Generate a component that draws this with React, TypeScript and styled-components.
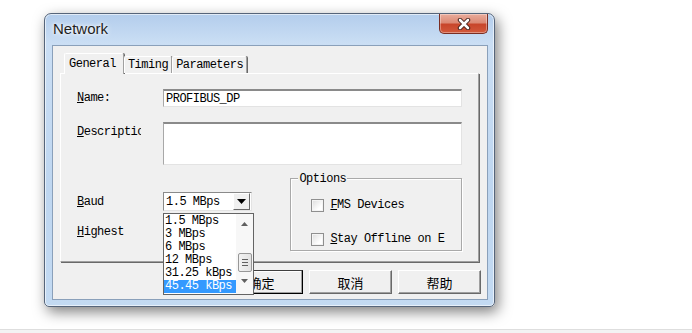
import React from "react";
import styled, { createGlobalStyle } from "styled-components";

const GlobalStyle = createGlobalStyle`
  html, body {
    margin: 0;
    padding: 0;
    background: #fff;
  }
  body {
    width: 692px;
    height: 333px;
    overflow: hidden;
    font-family: "Liberation Mono", "Noto Sans CJK SC", monospace;
  }
`;

const Desktop = styled.div`
  height: 329px;
  box-sizing: border-box;
  padding: 13px 0 0 44px;
  background: #fff;
`;

const Footer = styled.div`
  height: 4px;
  box-sizing: border-box;
  border-top: 1px solid #dedede;
  background: #f3f3f3;
`;

const Window = styled.div`
  width: 451px;
  height: 294px;
  box-sizing: border-box;
  display: flex;
  flex-direction: column;
  padding: 0 6px 6px 7px;
  border: 1px solid #56657a;
  border-radius: 7px 7px 5px 5px;
  background: linear-gradient(180deg, #b3cdec 0%, #cadef4 10%, #bed6f0 60%, #c3daf2 100%);
  box-shadow: 3px 5px 14px rgba(0, 0, 0, 0.5), inset 0 0 0 1px rgba(255, 255, 255, 0.6);
`;

const TitleBar = styled.div`
  height: 31px;
  display: flex;
  justify-content: space-between;
  align-items: flex-start;
`;

const Title = styled.span`
  margin: 6px 0 0 1px;
  font-family: "Liberation Sans", "Noto Sans", sans-serif;
  font-size: 15px;
  color: #1e1e1e;
  text-shadow: 0 0 6px #fff, 0 0 3px #fff;
`;

const CloseButton = styled.div`
  width: 49px;
  height: 20px;
  box-sizing: border-box;
  border: 1px solid #7a2d22;
  border-top: none;
  border-radius: 0 0 5px 5px;
  background: linear-gradient(180deg, #e9ac9c 0%, #dc8a75 45%, #c8462b 55%, #d2593c 100%);
  box-shadow: inset 0 0 0 1px rgba(255, 255, 255, 0.35);
  display: flex;
  align-items: center;
  justify-content: center;
`;

const Client = styled.div`
  flex: 1;
  display: flex;
  flex-direction: column;
  padding: 7px 6px 5px 7px;
  background: #f0f0f0;
  border: 1px solid #8aa0ba;
`;

const TabControl = styled.div`
  margin-right: 2px;
  display: flex;
  flex-direction: column;
`;

const TabStrip = styled.div`
  height: 20px;
  display: flex;
  align-items: flex-end;
  padding-left: 4px;
  position: relative;
  z-index: 1;
`;

const Tab = styled.div<{ $active?: boolean }>`
  height: ${(p) => (p.$active ? 21 : 17)}px;
  box-sizing: border-box;
  padding: ${(p) => (p.$active ? "0 7px 0 4px" : "0 3px 0 3px")};
  margin-bottom: ${(p) => (p.$active ? -1 : 0)}px;
  display: flex;
  align-items: center;
  font-size: 12px;
  letter-spacing: -0.5px;
  color: #000;
  background: #f0f0f0;
  border-left: 1px solid #fff;
  border-top: 1px solid #fff;
  border-right: 1px solid #a0a0a0;
  box-shadow: 1px 0 0 #696969;
  border-radius: 2px 2px 0 0;
`;

const TabPage = styled.div`
  height: 189px;
  box-sizing: border-box;
  padding: 15px 16px 0 16px;
  border-left: 1px solid #fff;
  border-top: 1px solid #fff;
  border-right: 1px solid #a0a0a0;
  border-bottom: 1px solid #a0a0a0;
  box-shadow: 1px 1px 0 #696969;
`;

const Row = styled.div<{ $top?: number; $align?: string }>`
  display: flex;
  align-items: ${(p) => p.$align || "center"};
  margin-top: ${(p) => p.$top || 0}px;
`;

const Label = styled.div<{ $clip?: number; $pad?: number }>`
  width: 86px;
  flex: none;
  font-size: 12px;
  letter-spacing: -0.5px;
  color: #000;
  padding-top: ${(p) => p.$pad || 0}px;
  span {
    display: inline-block;
    max-width: ${(p) => (p.$clip ? `${p.$clip}px` : "none")};
    overflow: hidden;
    white-space: nowrap;
    vertical-align: top;
  }
`;

const Field = styled.div<{ $h: number }>`
  width: 299px;
  height: ${(p) => p.$h}px;
  box-sizing: border-box;
  padding: 1px 2px;
  background: #fff;
  border-top: 2px solid #8a8a8a;
  border-left: 1px solid #a8a8a8;
  border-right: 1px solid #e3e3e3;
  border-bottom: 1px solid #e3e3e3;
  font-size: 12px;
  letter-spacing: -0.5px;
  line-height: 14px;
  color: #000;
`;

const Bottom = styled.div`
  display: flex;
  margin-top: 13px;
`;

const LeftCol = styled.div`
  width: 214px;
  padding-top: 14px;
`;

const Combo = styled.div`
  position: relative;
  width: 89px;
  height: 19px;
  box-sizing: border-box;
  background: #fff;
  border-top: 1px solid #8a8a8a;
  border-left: 1px solid #8a8a8a;
  border-right: 1px solid #e3e3e3;
  border-bottom: 1px solid #e3e3e3;
  display: flex;
  align-items: center;
  justify-content: space-between;
  font-size: 12px;
  letter-spacing: -0.5px;
  color: #000;
  padding-left: 2px;
`;

const ComboArrow = styled.div`
  width: 17px;
  height: 17px;
  box-sizing: border-box;
  background: #f0f0f0;
  border-left: 1px solid #fff;
  border-top: 1px solid #fff;
  border-right: 1px solid #696969;
  border-bottom: 1px solid #696969;
  display: flex;
  align-items: center;
  justify-content: center;
  margin-right: 1px;
`;

const Spacer = styled.div`
  height: 19px;
`;

const DropList = styled.div`
  position: absolute;
  top: 20px;
  left: -1px;
  width: 91px;
  height: 82px;
  box-sizing: border-box;
  border: 1px solid #646464;
  background: #fff;
  display: flex;
  z-index: 10;
`;

const Items = styled.div`
  flex: 1;
  padding-top: 1px;
`;

const Item = styled.div<{ $selected?: boolean }>`
  height: 13px;
  line-height: 13px;
  padding-left: 1px;
  font-size: 12px;
  letter-spacing: -0.5px;
  white-space: nowrap;
  color: ${(p) => (p.$selected ? "#fff" : "#000")};
  background: ${(p) => (p.$selected ? "#3399ff" : "transparent")};
`;

const ScrollBar = styled.div`
  width: 17px;
  background: #f7f7f7;
  display: flex;
  flex-direction: column;
  align-items: center;
  padding: 8px 0 0;
  box-sizing: border-box;
`;

const Thumb = styled.div`
  width: 14px;
  height: 19px;
  box-sizing: border-box;
  border: 1px solid #979797;
  border-radius: 2px;
  background: linear-gradient(90deg, #f2f2f2, #e2e2e2);
  display: flex;
  flex-direction: column;
  align-items: center;
  justify-content: center;
  gap: 2px;
  margin: 27px 0 7px;
  i {
    display: block;
    width: 6px;
    height: 1px;
    background: #606060;
  }
`;

const Group = styled.div`
  position: relative;
  width: 172px;
  height: 73px;
  box-sizing: border-box;
  border: 1px solid #a9a9a9;
  box-shadow: inset 1px 1px 0 #fff, 1px 1px 0 #fff;
  padding: 19px 0 0 20px;
  display: flex;
  flex-direction: column;
  gap: 20px;
`;

const Legend = styled.span`
  position: absolute;
  top: -7px;
  left: 7px;
  padding: 0 1px;
  background: #f0f0f0;
  font-size: 12px;
  letter-spacing: -0.5px;
  color: #000;
`;

const Check = styled.label`
  display: flex;
  align-items: center;
  gap: 6px;
  font-size: 12px;
  letter-spacing: -0.5px;
  color: #000;
  white-space: nowrap;
`;

const Box = styled.span`
  width: 13px;
  height: 13px;
  box-sizing: border-box;
  border: 1px solid #8f8f8f;
  background: linear-gradient(135deg, #dcdcdc, #fff 70%);
  box-shadow: inset 0 0 0 1px #f4f4f4;
`;

const Buttons = styled.div`
  display: flex;
  justify-content: flex-end;
  gap: 6px;
  margin-top: 8px;
`;

const Button = styled.div<{ $default?: boolean }>`
  width: 83px;
  height: 24px;
  box-sizing: border-box;
  background: #f0f0f0;
  border-left: 1px solid ${(p) => (p.$default ? "#404040" : "#fff")};
  border-top: 1px solid ${(p) => (p.$default ? "#404040" : "#fff")};
  border-right: 1px solid ${(p) => (p.$default ? "#000" : "#696969")};
  border-bottom: 1px solid ${(p) => (p.$default ? "#000" : "#696969")};
  box-shadow: inset -1px -1px 0 #a0a0a0${(p) => (p.$default ? ", inset 1px 1px 0 #fff" : "")};
  display: flex;
  align-items: center;
  justify-content: center;
  font-family: "Noto Sans CJK SC", sans-serif;
  font-size: 13px;
  color: #000;
`;

const bauds = ["1.5 MBps", "3 MBps", "6 MBps", "12 MBps", "31.25 kBps", "45.45 kBps"];

function Network() {
  return (
    <Window>
      <TitleBar>
        <Title>Network</Title>
        <CloseButton>
          <svg width="14" height="12" viewBox="0 0 14 12">
            <path d="M3 2 L11 10 M11 2 L3 10" stroke="#3b1a14" strokeWidth="4.4" strokeLinecap="round" />
            <path d="M3 2 L11 10 M11 2 L3 10" stroke="#fff" strokeWidth="2.6" strokeLinecap="round" />
          </svg>
        </CloseButton>
      </TitleBar>
      <Client>
        <TabControl>
          <TabStrip>
            <Tab $active>General</Tab>
            <Tab>Timing</Tab>
            <Tab>Parameters</Tab>
          </TabStrip>
          <TabPage>
            <Row>
              <Label>
                <u>N</u>ame:
              </Label>
              <Field $h={18}>PROFIBUS_DP</Field>
            </Row>
            <Row $top={15} $align="flex-start">
              <Label $clip={64} $pad={3}>
                <span>
                  <u>D</u>escription:
                </span>
              </Label>
              <Field $h={43} />
            </Row>
            <Bottom>
              <LeftCol>
                <Row>
                  <Label>
                    <u>B</u>aud
                  </Label>
                  <Combo>
                    <span>1.5 MBps</span>
                    <ComboArrow>
                      <svg width="9" height="5" viewBox="0 0 9 5">
                        <path d="M0 0 H9 L4.5 5 Z" fill="#000" />
                      </svg>
                    </ComboArrow>
                    <DropList>
                      <Items>
                        {bauds.map((b, i) => (
                          <Item key={b} $selected={i === bauds.length - 1}>
                            {b}
                          </Item>
                        ))}
                      </Items>
                      <ScrollBar>
                        <svg width="7" height="4" viewBox="0 0 7 4">
                          <path d="M0 4 H7 L3.5 0 Z" fill="#606060" />
                        </svg>
                        <Thumb>
                          <i />
                          <i />
                          <i />
                        </Thumb>
                        <svg width="7" height="4" viewBox="0 0 7 4">
                          <path d="M0 0 H7 L3.5 4 Z" fill="#606060" />
                        </svg>
                      </ScrollBar>
                    </DropList>
                  </Combo>
                </Row>
                <Row $top={11}>
                  <Label>
                    <u>H</u>ighest
                  </Label>
                  <Spacer />
                </Row>
              </LeftCol>
              <Group>
                <Legend>Options</Legend>
                <Check>
                  <Box />
                  <span>
                    <u>F</u>MS Devices
                  </span>
                </Check>
                <Check>
                  <Box />
                  <span>
                    <u>S</u>tay Offline on E
                  </span>
                </Check>
              </Group>
            </Bottom>
          </TabPage>
        </TabControl>
        <Buttons>
          <Button $default>确定</Button>
          <Button>取消</Button>
          <Button>帮助</Button>
        </Buttons>
      </Client>
    </Window>
  );
}

export default function App() {
  return (
    <>
      <GlobalStyle />
      <Desktop>
        <Network />
      </Desktop>
      <Footer />
    </>
  );
}
